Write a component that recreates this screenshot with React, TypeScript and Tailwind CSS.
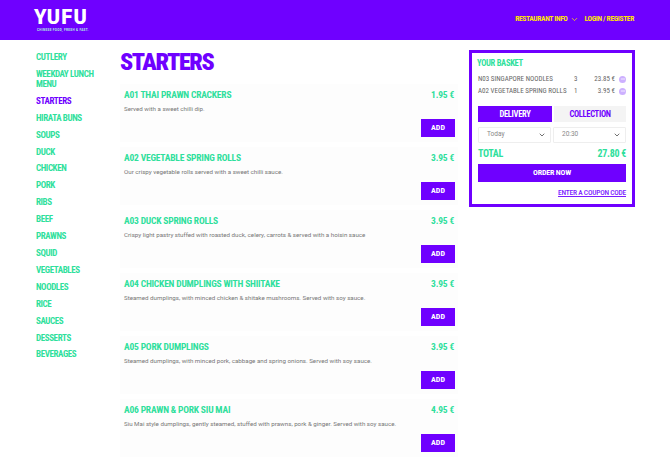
import { ChevronDown, Minus } from 'lucide-react';

const categories = [
  'Cutlery',
  'Weekday lunch menu',
  'Starters',
  'Hirata buns',
  'Soups',
  'Duck',
  'Chicken',
  'Pork',
  'Ribs',
  'Beef',
  'Prawns',
  'Squid',
  'Vegetables',
  'Noodles',
  'Rice',
  'Sauces',
  'Desserts',
  'Beverages',
];

const dishes = [
  { name: 'A01 Thai prawn crackers', price: '1.95 €', text: 'Served with a sweet chilli dip.' },
  { name: 'A02 Vegetable spring rolls', price: '3.95 €', text: 'Our crispy vegetable rolls served with a sweet chilli sauce.' },
  { name: 'A03 Duck spring rolls', price: '3.95 €', text: 'Crispy light pastry stuffed with roasted duck, celery, carrots & served with a hoisin sauce' },
  { name: 'A04 Chicken dumplings with shiitake', price: '3.95 €', text: 'Steamed dumplings, with minced chicken & shitake mushrooms. Served with soy sauce.' },
  { name: 'A05 Pork dumplings', price: '3.95 €', text: 'Steamed dumplings, with minced pork, cabbage and spring onions. Served with soy sauce.' },
  { name: 'A06 Prawn & pork siu mai', price: '4.95 €', text: 'Siu Mai style dumplings, gently steamed, stuffed with prawns, pork & ginger. Served with soy sauce.' },
];

const basket = [
  { name: 'N03 Singapore noodles', qty: 3, price: '23.85 €' },
  { name: 'A02 Vegetable spring rolls', qty: 1, price: '3.95 €' },
];

function DishRow({ name, price, text }: { name: string; price: string; text: string }) {
  return (
    <div className="mb-[5px] h-[58px] bg-[#fdfdfd] pl-1 pr-[3px] pt-[5px]">
      <div className="mr-px flex items-center justify-between font-stretch-condensed text-[9.5px] leading-[12px] font-bold tracking-[-0.2px] uppercase text-[#2fdf9c]">
        <span>{name}</span>
        <span>{price}</span>
      </div>
      <p className="mt-[3px] text-[6.2px] leading-[10px] text-[#777]">{text}</p>
      <div className="mt-[5px] flex justify-end">
        <button className="h-[18px] w-[34px] bg-[#6f00ff] font-stretch-condensed text-[8px] font-bold text-white">ADD</button>
      </div>
    </div>
  );
}

function TimeSelect({ value }: { value: string }) {
  return (
    <div className="flex h-[16px] flex-1 items-center justify-between rounded-[1px] border border-[#eee] pl-2 pr-1 text-[6.5px] text-[#888]">
      <span>{value}</span>
      <ChevronDown size={8} strokeWidth={2.5} className="text-[#555]" />
    </div>
  );
}

export default function App() {
  return (
    <div className="h-[460px] w-[670px] overflow-hidden bg-white font-['Roboto',sans-serif]">
      <header className="flex h-[40px] items-center justify-between bg-[#6f00ff] pl-[34px] pr-[36px]">
        <div className="flex flex-col items-start">
          <span className="text-[20px] leading-[18px] font-black tracking-[1.2px] text-white">YUFU</span>
          <span className="mt-[2px] ml-[3px] text-[3px] leading-[4px] font-bold tracking-[0.35px] text-[#b0f0e0]">CHINESE FOOD, FRESH & FAST.</span>
        </div>
        <nav className="mb-[2px] flex items-center font-stretch-condensed text-[7.5px] font-bold tracking-[-0.35px] text-[#ffe600]">
          <span>RESTAURANT INFO</span>
          <ChevronDown size={9} className="ml-[2px]" />
          <span className="ml-[6px]">LOGIN / REGISTER</span>
        </nav>
      </header>

      <div className="flex items-start">
        <aside className="ml-[36px] mt-[12px] w-[84px]">
          {categories.map(cat => (
            <a
              key={cat}
              className={`mb-[6.92px] block w-[76px] font-stretch-condensed text-[9px] leading-[10px] font-bold tracking-[-0.4px] uppercase ${cat === 'Starters' ? 'text-[#6f00ff]' : 'text-[#2fdf9c]'}`}
            >
              {cat}
            </a>
          ))}
        </aside>

        <main className="w-[338px]">
          <h1 className="mt-[10px] mb-[10px] font-stretch-condensed text-[24px] leading-[24px] font-black tracking-[-1.4px] text-[#6f00ff]">STARTERS</h1>
          {dishes.map(d => (
            <DishRow key={d.name} {...d} />
          ))}
        </main>

        <aside className="ml-[11px] mt-[10px] h-[157px] w-[166px] border-[3px] border-[#6f00ff] px-[6px] pt-[5px]">
          <h2 className="-ml-px font-stretch-condensed text-[8.5px] leading-[10px] font-bold tracking-[-0.3px] text-[#2fdf9c]">YOUR BASKET</h2>
          <div className="mt-[5px]">
            {basket.map(item => (
              <div key={item.name} className="flex h-[12px] items-center font-stretch-condensed text-[7px] uppercase text-[#666]">
                <span className="w-[96px] whitespace-nowrap">{item.name}</span>
                <span className="w-[14px]">{item.qty}</span>
                <span className="w-[27px] text-right">{item.price}</span>
                <span className="ml-[4px] flex h-[7px] w-[7px] items-center justify-center rounded-full bg-[#cdb0ff] text-white">
                  <Minus size={6} strokeWidth={3} />
                </span>
              </div>
            ))}
          </div>
          <div className="mt-[9px] flex gap-[2px] font-stretch-condensed text-[8.5px] font-bold tracking-[-0.3px]">
            <button className="h-[16px] w-[74px] bg-[#6f00ff] text-white">DELIVERY</button>
            <button className="h-[16px] flex-1 bg-[#f4f4f4] text-[#6f00ff]">COLLECTION</button>
          </div>
          <div className="mt-[5px] flex gap-[2px]">
            <TimeSelect value="Today" />
            <TimeSelect value="20:30" />
          </div>
          <div className="mt-[5px] flex items-center justify-between font-stretch-condensed text-[10px] leading-[12px] font-bold tracking-[-0.3px] text-[#2fdf9c]">
            <span>TOTAL</span>
            <span>27.80 €</span>
          </div>
          <button className="mt-[4px] block h-[18px] w-full bg-[#6f00ff] font-stretch-condensed text-[8px] font-bold tracking-[-0.2px] text-white">ORDER NOW</button>
          <div className="mt-[5px] text-right font-stretch-condensed text-[7.5px] leading-[11px] font-medium tracking-[-0.25px] text-[#7a1aff] underline">ENTER A COUPON CODE</div>
        </aside>
      </div>
    </div>
  );
}
